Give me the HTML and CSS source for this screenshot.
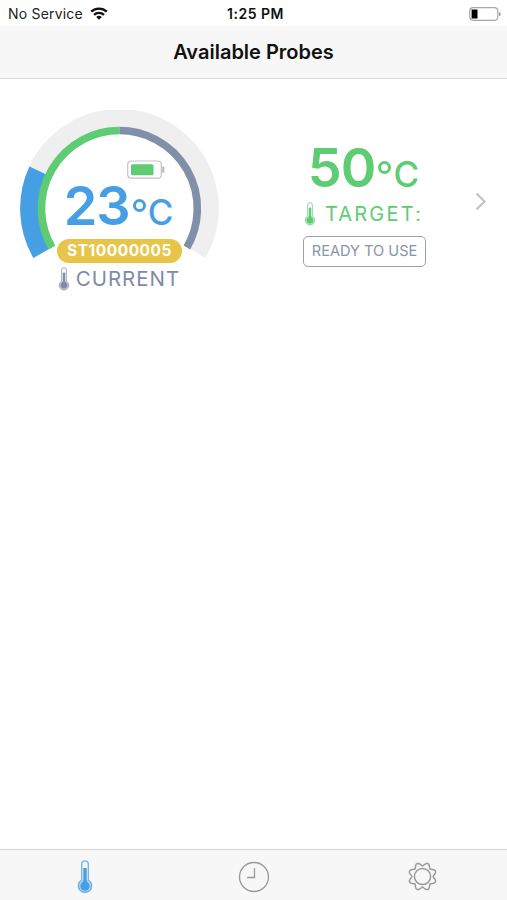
FILE: index.html
```html
<!DOCTYPE html>
<html lang="en">
<head>
<meta charset="utf-8">
<title>Available Probes</title>
<link rel="stylesheet" href="styles.css">
</head>
<body>
<svg width="0" height="0" class="defs" aria-hidden="true">
  <symbol id="thermo" viewBox="0 0 16 34">
    <path d="M4.700 20V4.200a3.300 3.300 0 0 1 6.600 0V20a6.700 6.700 0 1 1-6.600 0z" fill="none" stroke="currentColor" stroke-width="1.400" opacity=".75"/>
    <circle cx="8" cy="26" r="6.500" fill="currentColor" opacity=".4"/>
    <circle cx="8" cy="26" r="4.700" fill="currentColor"/>
    <path d="M8 8v17" stroke="currentColor" stroke-width="3.400"/>
  </symbol>
</svg>
<div class="screen">
  <div class="status">
    <div class="carrier">
      <span>No Service</span>
      <svg width="18" height="13" viewBox="0 0 18 13" fill="none" stroke="#111" stroke-width="2.300">
        <path d="M1.200 4.700a11.300 11.300 0 0 1 15.600 0"/>
        <path d="M4 7.900a7.300 7.300 0 0 1 10 0"/>
        <path d="M9 12.800L6.200 10a4 4 0 0 1 5.600 0z" fill="#111" stroke="none"/>
      </svg>
    </div>
    <time class="clock">1:25 PM</time>
    <svg class="phone-battery" width="32" height="14" viewBox="0 0 32 14">
      <rect x=".7" y=".7" width="28.100" height="12.600" rx="3.500" fill="#fff" stroke="#a6a6a6" stroke-width="1.200"/>
      <path d="M2.600 2.500h5.900v9H2.600z" fill="#000"/>
      <path d="M30 5v4.200q1.700-.4 1.700-2.100T30 5z" fill="#999"/>
    </svg>
  </div>
  <header class="navbar"><h1>Available Probes</h1></header>
  <main class="list">
    <section class="probe">
      <div class="gauge">
        <svg class="dial" width="200" height="152" viewBox="0.6 0.500 200 152" fill="none">
          <path d="M24.400 142.500A87.300 87.300 0 1 1 175.600 142.500" stroke="#efefef" stroke-width="24"/>
          <path d="M24.400 142.500A87.300 87.300 0 0 1 20.900 62.100" stroke="#479fe3" stroke-width="24"/>
          <path d="M32.500 138A78 78 0 0 1 100 21" stroke="#5ecc73" stroke-width="7.600"/>
          <path d="M100 21A78 78 0 0 1 167.500 138" stroke="#8090a8" stroke-width="7.600"/>
        </svg>
        <div class="reading">
          <svg class="probe-battery" width="38" height="20" viewBox="0 0 38 20">
            <rect x=".7" y="1" width="33.600" height="17.200" rx="3.500" fill="#fff" stroke="#c4c1c8" stroke-width="1.200"/>
            <rect x="4" y="4.200" width="22.500" height="11" rx="1.500" fill="#5ecc73"/>
            <path d="M35 6.500h1.200q1.300 0 1.300 1.300v3.700q0 1.300-1.300 1.300H35z" fill="#c4c1c8"/>
          </svg>
          <div class="temp blue"><span class="num">23</span><span class="deg"></span><span class="unit">C</span></div>
          <div class="serial">ST10000005</div>
          <div class="current"><svg width="12" height="24"><use href="#thermo"/></svg><span>CURRENT</span></div>
        </div>
      </div>
      <div class="target">
        <div class="temp green"><span class="num">50</span><span class="deg"></span><span class="unit">C</span></div>
        <div class="goal"><svg width="12" height="24"><use href="#thermo"/></svg><span>TARGET:</span></div>
        <div class="state">READY TO USE</div>
      </div>
      <svg class="chevron" width="12" height="19" viewBox="0 0 12 19" fill="none" stroke="#c5c5c9" stroke-width="2.300"><path d="M1.500 1.500l8 8-8 8"/></svg>
    </section>
  </main>
  <nav class="tabs">
    <a class="tab active"><svg width="16" height="34"><use href="#thermo"/></svg></a>
    <a class="tab"><svg width="32" height="32" viewBox="0 0 32 32" fill="none" stroke="#999" stroke-width="1.300"><circle cx="16" cy="16" r="14.500"/><path d="M16.500 7v9.500H9"/></svg></a>
    <a class="tab"><svg width="32" height="32" viewBox="-15.500 -15.500 32 32" fill="none" stroke="#999" stroke-width="1.500" stroke-linejoin="round"><circle r="8.100"/><path id="teeth"/></svg></a>
  </nav>
</div>
<script src="gear.js"></script>
</body>
</html>
```
FILE: styles.css
```css
* { box-sizing: border-box; }
body { margin: 0; background: #fff; font-family: Inter, "Liberation Sans", sans-serif; }
.defs { display: none; }
svg { display: block; flex: none; }
.screen { width: 507px; height: 900px; display: flex; flex-direction: column; overflow: hidden; }
.status { height: 26px; display: grid; grid-template-columns: 1fr auto 1fr; align-items: center; padding: 1px 6px 0 8px; font-size: 14px; color: #222; }
.carrier { display: flex; align-items: center; gap: 7px; letter-spacing: .2px; }
.clock { font-weight: 600; color: #111; font-size: 14px; letter-spacing: .5px; padding-left: 2px; }
.phone-battery { justify-self: end; }
.navbar { height: 53px; background: #f7f7f7; border-bottom: 1px solid #d9d9d9; display: flex; align-items: center; justify-content: center; }
h1 { margin: 0; font-size: 20px; font-weight: 600; letter-spacing: 0; color: #111; }
.list { flex: 1; }
.probe { height: 240px; padding: 31px 20px 0 20px; display: flex; align-items: flex-start; }
.gauge { width: 200px; display: grid; }
.dial, .reading { grid-area: 1 / 1; }
.reading { display: flex; flex-direction: column; align-items: center; padding: 50px 1px 0 0; }
.probe-battery { margin-left: 53px; }
.temp { display: flex; align-items: baseline; height: 58px; line-height: 58px; }
.blue { color: #479fe3; height: 54px; line-height: 51px; margin: 0 2px 5px 0; }
.green { color: #5ecc73; }
.num { font-size: 54px; font-weight: 600; letter-spacing: -1px; }
.deg { width: 13px; height: 13px; border: 3px solid currentColor; border-radius: 50%; margin: 0 2px 0 3px; transform: translateY(-13px); }
.unit { font-size: 35px; font-weight: 500; }
.serial { width: 125px; height: 24px; border-radius: 12px; background: #e7c548; color: #fff; font-size: 15.500px; font-weight: 700; letter-spacing: .5px; line-height: 24px; text-align: center; }
.current { display: flex; align-items: center; gap: 6px; color: #7f8ba6; font-size: 20.500px; letter-spacing: 1px; margin: 3px 0 0 -1px; }
.target { width: 123px; margin: 29px 0 0 83px; display: flex; flex-direction: column; align-items: center; }
.temp.green { margin-right: 2px; }
.goal { display: flex; align-items: center; gap: 9px; color: #5ecc73; font-size: 20px; letter-spacing: 2.200px; margin: 4px 2px 0 0; height: 25px; }
.state { width: 123px; height: 31px; border: 1.500px solid #9aa0b8; border-radius: 5px; color: #8a93aa; font-size: 14.600px; line-height: 29px; text-align: center; margin-top: 10px; white-space: nowrap; }
.chevron { margin: 82px 0 0 49px; }
.tabs { height: 51px; background: #f7f7f7; border-top: 1px solid #d5d5d5; display: grid; grid-template-columns: repeat(3, 1fr); }
.tab { display: flex; align-items: center; justify-content: center; padding-top: 3px; }
.active { color: #479fe3; }
```
FILE: gear.js
```js
// Eight narrow teeth joined by concave scallops.
const points = [];
for (let i = 0; i < 240; i++) {
  const a = (i / 240) * Math.PI * 2;
  const wave = Math.abs(Math.cos(4 * (a - Math.PI / 8)));
  const r = 10.6 + 3.4 * Math.pow(wave, 1.7);
  points.push((r * Math.cos(a)).toFixed(2) + " " + (r * Math.sin(a)).toFixed(2));
}
document.getElementById("teeth").setAttribute("d", "M" + points.join("L") + "Z");
```
